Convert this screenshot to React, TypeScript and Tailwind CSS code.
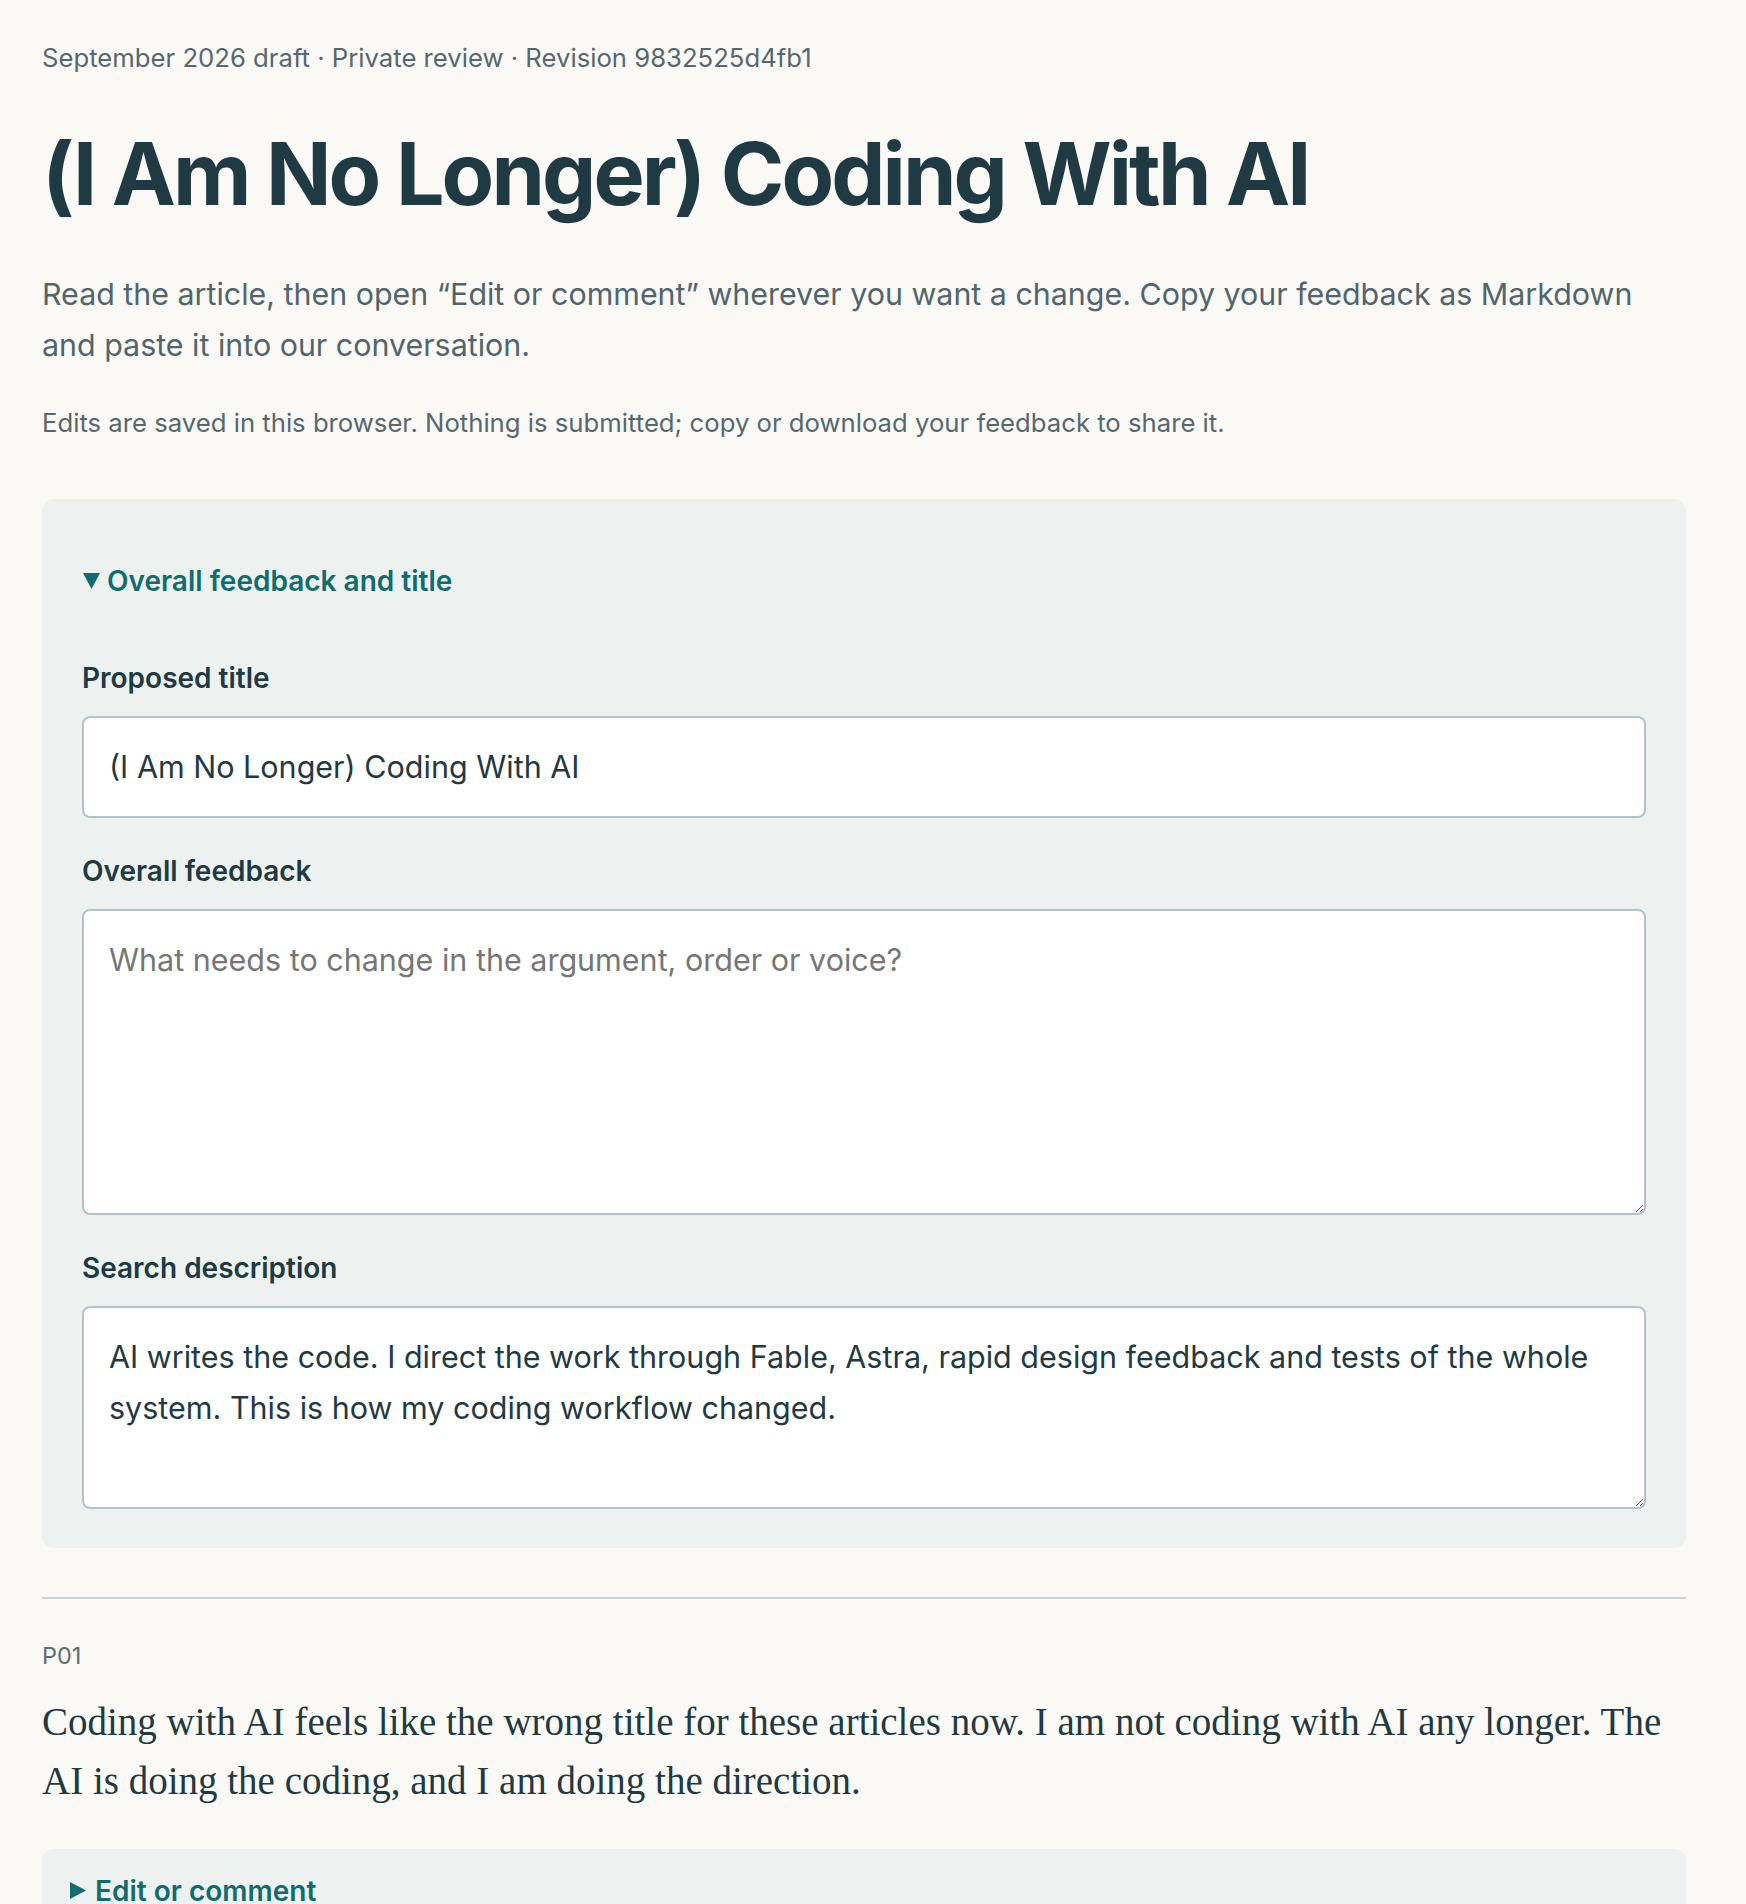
import React from "react";

function OpenMarker() {
  return (
    <svg width="17" height="16" viewBox="0 0 17 16" className="mr-[7px] shrink-0" aria-hidden="true">
      <polygon points="0,0 17,0 8.5,16" fill="currentColor" />
    </svg>
  );
}

function ClosedMarker() {
  return (
    <svg width="16" height="17" viewBox="0 0 16 17" className="mr-[9px] shrink-0" aria-hidden="true">
      <polygon points="0,0 16,8.5 0,17" fill="currentColor" />
    </svg>
  );
}

export default function App() {
  return (
    <div className="min-h-screen w-full bg-[#faf9f6] font-[family-name:Inter,'Noto_Sans',sans-serif] text-[#1f3a43]">
      <main className="ml-[42px] w-[1644px] pt-[40px] pb-[40px]">
        <p className="text-[25.7px] leading-[36px] text-[#56686e]">
          September 2026 draft · Private review · Revision 9832525d4fb1
        </p>
        <h1 className="mt-[51px] text-[86px] font-bold leading-[1.1] tracking-[-0.034em] text-[#1f3a43]">
          (I Am No Longer) Coding With AI
        </h1>
        <p className="mt-[47px] text-[30.4px] leading-[51px] text-[#52656c]">
          Read the article, then open “Edit or comment” wherever you want a change. Copy your feedback as Markdown and
          paste it into our conversation.
        </p>
        <p className="mt-[34px] text-[25.7px] leading-[36px] text-[#56686e]">
          Edits are saved in this browser. Nothing is submitted; copy or download your feedback to share it.
        </p>

        <details open className="mt-[58px] rounded-[12px] bg-[#edf2f0] px-[40px] pt-[62px] pb-[39px]">
          <summary className="flex cursor-pointer list-none items-center pl-[1px] text-[28px] font-semibold leading-[40px] text-[#0f6c6f]">
            <OpenMarker />
            <span>Overall feedback and title</span>
          </summary>
          <div className="mt-[58px] flex flex-col gap-[34px]">
            <div className="flex flex-col">
              <label className="mb-[18px] block text-[28px] font-semibold leading-[39px] text-[#1f3a43]">
                Proposed title
              </label>
              <input
                type="text"
                defaultValue="(I Am No Longer) Coding With AI"
                className="block h-[102px] w-full rounded-[8px] border-2 border-[#b2c3c7] bg-white px-[25px] text-[30.5px] leading-[51px] text-[#1f3a43] outline-none"
              />
            </div>
            <div className="flex flex-col">
              <label className="mb-[18px] block text-[28px] font-semibold leading-[39px] text-[#1f3a43]">
                Overall feedback
              </label>
              <textarea
                placeholder="What needs to change in the argument, order or voice?"
                className="block h-[306px] w-full rounded-[8px] border-2 border-[#b2c3c7] bg-white px-[25px] py-[23px] text-[30.5px] leading-[51px] text-[#1f3a43] outline-none placeholder:text-[#767676]"
              />
            </div>
            <div className="flex flex-col">
              <label className="mb-[18px] block text-[28px] font-semibold leading-[39px] text-[#1f3a43]">
                Search description
              </label>
              <textarea
                defaultValue="AI writes the code. I direct the work through Fable, Astra, rapid design feedback and tests of the whole system. This is how my coding workflow changed."
                className="block h-[203px] w-full rounded-[8px] border-2 border-[#b2c3c7] bg-white px-[25px] py-[23px] text-[30.5px] leading-[51px] text-[#1f3a43] outline-none"
              />
            </div>
          </div>
        </details>

        <div className="mt-[49px] h-[2px] w-full bg-[#cad4d4]" />

        <p className="mt-[40px] text-[23.5px] leading-[34px] text-[#5b6e73]">P01</p>
        <p className="mt-[19px] font-[family-name:'Liberation_Serif',serif] text-[39px] leading-[59.5px] text-[#1f3a43]">
          Coding with AI feels like the wrong title for these articles now. I am not coding with AI any longer. The
          <br />
          AI is doing the coding, and I am doing the direction.
        </p>

        <details className="mt-[38px] rounded-[12px] bg-[#edf2f0] px-[27px] pt-[22px] pb-[18px]">
          <summary className="flex cursor-pointer list-none items-center pl-[1px] text-[28px] font-semibold leading-[40px] text-[#0f6c6f]">
            <ClosedMarker />
            <span>Edit or comment</span>
          </summary>
        </details>
      </main>
    </div>
  );
}
